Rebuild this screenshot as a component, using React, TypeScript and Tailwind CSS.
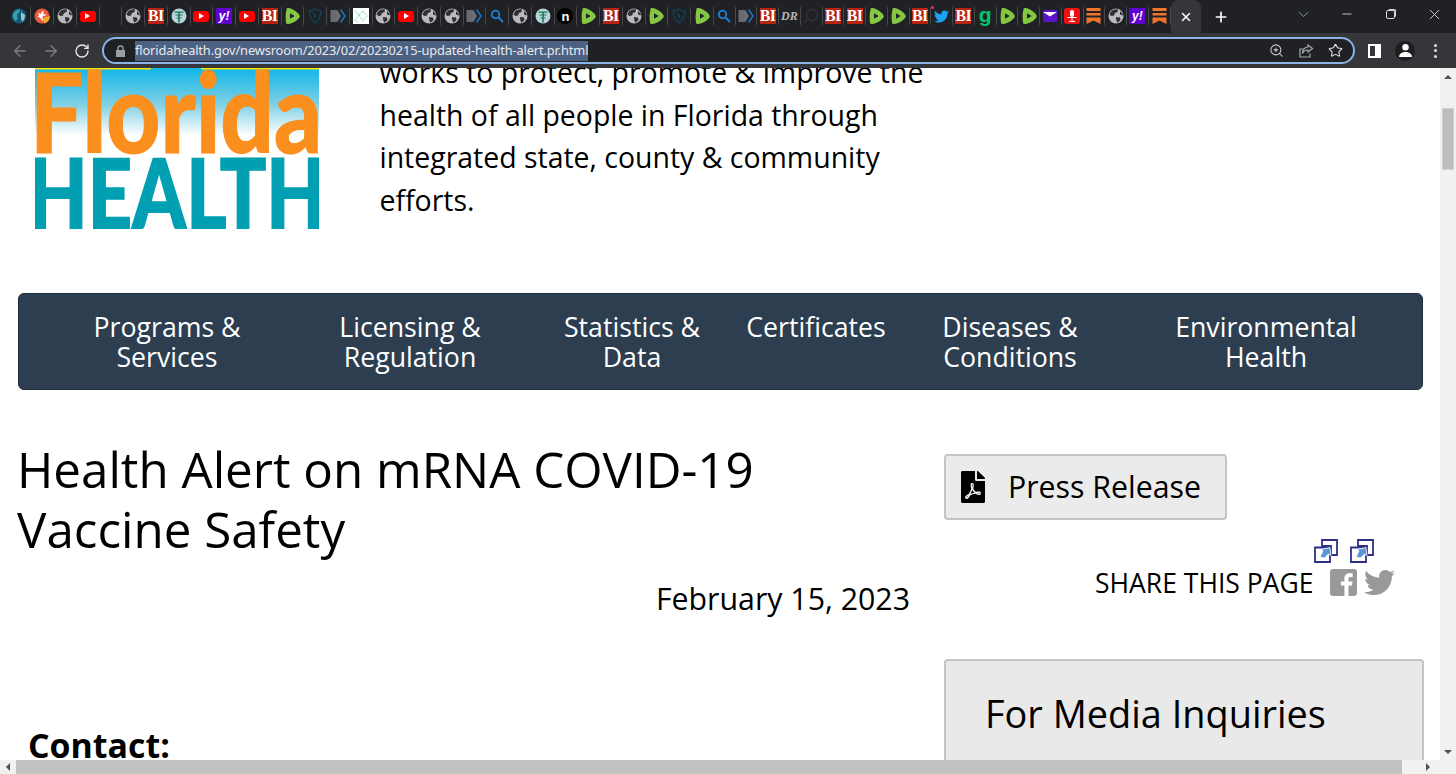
import { ArrowLeft, ArrowRight, ChevronDown, Minus, Plus, RotateCw, Star, X, ZoomIn } from "lucide-react";
import { FaFilePdf, FaTwitter } from "react-icons/fa";

const WIDE_TABS = [
  "earth", "splash", "globe", "yt", "none", "globe", "bi", "tree", "yt", "yahoo", "yt", "bi", "rumble", "shield", "tag", "pattern",
  "globe", "yt", "globe", "globe", "tag", "search", "globe", "tree", "n", "rumble", "bi", "globe", "rumble", "shield", "rumble",
];
const NARROW_TABS = [
  "search", "tag", "bi", "dr", "dark", "bi", "bi", "rumble", "rumble", "bi", "twitter", "bi", "g", "rumble", "rumble", "mail", "mic",
  "bookmark", "globe", "yahoo", "bookmark",
];

const NAV = [
  ["Programs &", "Services"],
  ["Licensing &", "Regulation"],
  ["Statistics &", "Data"],
  ["Certificates"],
  ["Diseases &", "Conditions"],
  ["Environmental", "Health"],
];

function Favicon({ kind }: { kind: string }) {
  switch (kind) {
    case "none":
      return null;
    case "globe":
      return (
        <svg width="16" height="16" viewBox="0 0 16 16">
          <circle cx="8" cy="8" r="7.5" fill="#b9babc" />
          <path d="M3 3.5C5 1.5 8 1 10 1.5L9.5 4 7 5 6 7.5 3.5 8 1.5 6.5ZM8 9l4 .5.5 2.5-3 2.8-1.2-2.3ZM12 3l2.5 2.5.5 2-3-1Z" fill="#2f3033" />
        </svg>
      );
    case "yt":
      return (
        <div className="flex h-[11px] w-[16px] items-center justify-center rounded-[3px] bg-[#f00]">
          <div className="h-0 w-0 border-y-[3px] border-l-[5px] border-y-transparent border-l-white" />
        </div>
      );
    case "bi":
      return (
        <div className="flex h-[16px] w-[16px] items-center justify-center bg-[#b7230f] font-['Liberation_Serif',serif] text-[16px] leading-none font-bold tracking-[-0.5px] text-white">
          BI
        </div>
      );
    case "rumble":
      return (
        <svg width="16" height="16" viewBox="0 0 16 16">
          <path d="M2.5 1.5C2 .5 3 0 4.5 0 8 .3 13 3.5 15 6.5c1 1.500 1 2.500 0 3.500-2.500 3-7 5.700-10.500 6C3 16 2 15.500 2 14.500c-.6-4-.6-9 .5-13Z" fill="#85c742" />
          <path d="M6 5.300 10.700 8 6 10.700Z" fill="#202124" />
        </svg>
      );
    case "yahoo":
      return (
        <div className="flex h-[16px] w-[16px] items-center justify-center bg-[#5f01d1] font-['Liberation_Sans',sans-serif] text-[12px] leading-none font-bold italic text-white">
          y!
        </div>
      );
    case "tree":
      return (
        <svg width="16" height="16" viewBox="0 0 16 16">
          <circle cx="8" cy="8" r="7.500" fill="#b7d3dc" />
          <path d="M3.500 3.500h9v1.300h-9ZM4.500 6.500h7v1.100h-7ZM7.200 3.500h1.600v11H7.200ZM5.500 9.500h5v1h-5Z" fill="#1c7a55" />
        </svg>
      );
    case "earth":
      return (
        <svg width="16" height="16" viewBox="0 0 16 16">
          <circle cx="8" cy="8" r="7.500" fill="#14587a" />
          <path d="M2 6c2-4 5-5 7-4.500L8 5 6 6l.5 5-2 2C2.500 11 1.500 9 2 6Z" fill="#3aa0a8" />
          <path d="M10 4l4 3-.5 4L11 14l-1-4Z" fill="#8ccbd0" />
        </svg>
      );
    case "splash":
      return (
        <svg width="16" height="16" viewBox="0 0 16 16">
          <circle cx="8" cy="8" r="7.500" fill="#ee5b3a" />
          <path d="M10 9.500 16 8a8 8 0 0 1-6 7.500Z" fill="#f6a623" />
          <path d="M4 5l3 1 1-3 2 1-1 2 3 .5-1 1.500-2-.5-.5 3 2 2H8L6 9.500 3.500 9 5 7.500Z" fill="#fff" />
        </svg>
      );
    case "shield":
      return (
        <svg width="16" height="16" viewBox="0 0 16 16" fill="none" stroke="#10455c" strokeWidth="1.300">
          <path d="M2 3c2 0 5-1 6-2 2 1 4 2 6 2 0 5-2 9-6 12C4.500 12 2.500 8 2 3Z" />
          <path d="M6 5l3 3-2 2" />
        </svg>
      );
    case "tag":
      return (
        <svg width="16" height="16" viewBox="0 0 16 16">
          <path d="M.5 2h7L11 8l-3.500 6h-7Z" fill="#6b6c70" />
          <path d="M10.500 1.500 15 8l-4.500 6.500" fill="none" stroke="#1a73c8" strokeWidth="1.600" />
        </svg>
      );
    case "pattern":
      return (
        <div className="flex h-[16px] w-[16px] items-center justify-center bg-white">
          <svg width="14" height="14" viewBox="0 0 14 14" fill="none" stroke="#9fdccf" strokeWidth="1.200" strokeDasharray="2 1">
            <path d="M1 2l4 4 4-4M9 2l4 5-4 5M5 6 1 11l3 2M5 6l4 6" />
          </svg>
        </div>
      );
    case "search":
      return (
        <svg width="14" height="14" viewBox="0 0 14 14" fill="none" stroke="#1c84d8" strokeWidth="1.800">
          <circle cx="5.500" cy="5.500" r="3.800" />
          <path d="m8.500 8.500 4.500 4.500" />
        </svg>
      );
    case "n":
      return (
        <div className="flex h-[16px] w-[16px] items-center justify-center rounded-full bg-black font-['Liberation_Sans',sans-serif] text-[13px] leading-none font-bold text-white">
          n
        </div>
      );
    case "dr":
      return <div className="font-['Liberation_Serif',serif] text-[12px] leading-none font-bold italic text-[#b5b5b5]">DR</div>;
    case "dark":
      return (
        <svg width="16" height="16" viewBox="0 0 16 16" fill="none" stroke="#2e2f32" strokeWidth="1.800">
          <circle cx="9" cy="7" r="5.500" />
          <path d="M5 11l-3.500 3.500" />
        </svg>
      );
    case "twitter":
      return (
        <div className="relative">
          <FaTwitter className="text-[#1da1f2]" size={15} />
          <div className="absolute -top-[3px] -left-[3px] h-[3px] w-[3px] rounded-full bg-[#ee2a7b]" />
        </div>
      );
    case "g":
      return <div className="-mt-[4px] font-['Liberation_Sans',sans-serif] text-[21px] leading-none font-bold text-[#05c46b]">g</div>;
    case "mail":
      return (
        <svg width="16" height="14" viewBox="0 0 16 14">
          <path d="M1 1h14v12H1Z" fill="#5a14c8" />
          <path d="M1 3h14L8 7.500Z" fill="#fff" />
        </svg>
      );
    case "mic":
      return (
        <svg width="16" height="16" viewBox="0 0 16 16">
          <rect width="16" height="16" rx="3" fill="#ee1111" />
          <rect x="6" y="2" width="4" height="7" rx="2" fill="#fff" />
          <path d="M3.500 9h9v1h-9ZM7.500 10h1v3h-1ZM5 13h6v1H5Z" fill="#fff" />
        </svg>
      );
    case "bookmark":
      return (
        <svg width="15" height="16" viewBox="0 0 15 16">
          <path d="M.5 0h14v3H.5ZM.5 5h14v2.500H.5Z" fill="#f0742a" />
          <path d="M.5 9.500h14V16l-7-3.500L.5 16Z" fill="#f0742a" />
        </svg>
      );
    default:
      return null;
  }
}

function TabCell({ kind, wide }: { kind: string; wide: boolean }) {
  return (
    <div className={`flex h-[18px] shrink-0 items-center justify-center border-r border-[#47484c] ${wide ? "w-[22.75px]" : "w-[21.75px]"}`}>
      <Favicon kind={kind} />
    </div>
  );
}

function ExternalIcon() {
  return (
    <svg width="24" height="24" viewBox="0 0 24 24">
      <path d="M8 1h15v15H17V7H8Z" fill="#fff" stroke="#2e2f86" strokeWidth="1.800" />
      <path d="M1 8.500h15v14.500H1Z" fill="#fff" stroke="#2e2f86" strokeWidth="1.800" />
      <path d="M6 18l3-6-2-1.500 9-2 1 8-2.500-1.500-4 4Z" fill="#5d93d9" stroke="#fff" strokeWidth="0.800" />
    </svg>
  );
}

function FacebookIcon() {
  return (
    <svg width="27" height="27" viewBox="0 0 27 27" className="ml-[17px] -mt-[1px] shrink-0">
      <rect width="27" height="27" rx="3" fill="#999" />
      <path d="M18.500 27V16.500h3.400l.6-4h-4V10c0-1.200.4-2 2.100-2h2.100V4.400c-.4 0-1.600-.2-3.100-.2-3.100 0-5.200 1.900-5.200 5.300v3h-3.500v4h3.500V27Z" fill="#fff" />
    </svg>
  );
}

function FloridaLogo() {
  return (
    <svg width="284" height="161" viewBox="0 0 284 161" className="shrink-0">
      <defs>
        <linearGradient id="sky" x1="0" y1="0" x2="0" y2="1">
          <stop offset="0" stopColor="#11b6e8" />
          <stop offset="0.4" stopColor="#7fcfe4" />
          <stop offset="0.75" stopColor="#ffffff" />
        </linearGradient>
      </defs>
      <rect width="284" height="90" fill="url(#sky)" />
      <rect width="116" height="1.500" fill="#ffe600" />
      <rect x="166" width="118" height="1.500" fill="#ffe600" />
      <text x="-5" y="85" textLength="292" lengthAdjust="spacingAndGlyphs" fontFamily="Lato, sans-serif" fontWeight="900" fontSize="110" fill="#fa8f1e" stroke="#fa8f1e" strokeWidth="1">
        Florida
      </text>
      <text x="-7" y="161" textLength="298" lengthAdjust="spacingAndGlyphs" fontFamily="Lato, sans-serif" fontWeight="900" fontSize="98" fill="#009fb1" stroke="#009fb1" strokeWidth="1.500">
        HEALTH
      </text>
    </svg>
  );
}

export default function App() {
  return (
    <div className="flex h-[774px] w-[1456px] flex-col overflow-hidden bg-white font-['Open_Sans',sans-serif] text-black">
      {/* tab strip */}
      <div className="flex h-[33px] shrink-0 bg-[#202124]">
        <div className="flex h-[33px] items-center pl-[8.500px] pb-px">
          {WIDE_TABS.map((k, i) => (
            <TabCell key={i} kind={k} wide />
          ))}
          {NARROW_TABS.map((k, i) => (
            <TabCell key={i} kind={k} wide={false} />
          ))}
        </div>
        <div className="flex h-[33px] w-[30px] shrink-0 items-center justify-center rounded-t-lg bg-[#35363a]">
          <X size={14} strokeWidth={2.500} className="text-white" />
        </div>
        <div className="flex h-[33px] w-[40px] shrink-0 items-center justify-center">
          <Plus size={16} strokeWidth={2.500} className="text-white" />
        </div>
        <div className="flex-1" />
        <div className="flex h-[28px] shrink-0 text-[#d5d6d8]">
          <div className="flex w-[43.500px] items-center justify-center">
            <ChevronDown size={17} strokeWidth={1.300} className="text-[#9aa0a6]" />
          </div>
          <div className="flex w-[43.500px] items-center justify-center">
            <Minus size={14} strokeWidth={1.500} />
          </div>
          <div className="flex w-[43.500px] items-center justify-center">
            <div className="relative h-[9px] w-[9px] rounded-[2px] border border-[#d5d6d8] shadow-[1.500px_-1.500px_0_-0.500px_#d5d6d8]" />
          </div>
          <div className="flex w-[43.500px] items-center justify-center">
            <X size={17} strokeWidth={1.300} />
          </div>
        </div>
      </div>

      {/* toolbar */}
      <div className="flex h-[35px] shrink-0 items-center bg-[#35363a]">
        <div className="flex w-[102px] shrink-0 items-center pl-[11px]">
          <ArrowLeft size={18} strokeWidth={1.700} className="text-[#7c7e82]" />
          <ArrowRight size={18} strokeWidth={1.700} className="ml-[13px] text-[#7c7e82]" />
          <RotateCw size={16} strokeWidth={2} className="ml-[14px] text-[#e8eaed]" />
        </div>
        <div className="flex h-[27px] w-[1253px] shrink-0 items-center rounded-full border-2 border-[#8ab4e8] bg-[#202124] pr-[10px] pl-[11px]">
          <svg width="11" height="12" viewBox="0 0 11 12" fill="#9aa0a6">
            <path d="M1 5h9v7H1Z" />
            <path d="M3 5V3.500a2.500 2.500 0 0 1 5 0V5" fill="none" stroke="#9aa0a6" strokeWidth="1.300" />
          </svg>
          <span className="ml-[9px] flex h-[20px] items-center bg-[#4d6182] font-['Noto_Sans',sans-serif] text-[12.800px] tracking-[-0.120px] whitespace-nowrap text-[#e8eaed]">
            floridahealth.gov/newsroom/2023/02/20230215-updated-health-alert.pr.html
          </span>
          <div className="flex-1" />
          <ZoomIn size={15} strokeWidth={1.700} className="text-[#c9cbce]" />
          <svg width="16" height="16" viewBox="0 0 16 16" fill="none" stroke="#a6a8ac" strokeWidth="1.200" className="ml-[14px]">
            <path d="M12 10.500V14H2V6h3" />
            <path d="M10 2l4.500 3.500L10 9V7C7.500 7 5.500 8 4.500 10.500 4.500 7 6.500 4 10 4Z" />
          </svg>
          <Star size={15} strokeWidth={1.700} className="ml-[14px] text-[#e8eaed]" />
        </div>
        <div className="ml-[13px] flex h-[14px] w-[13px] shrink-0 justify-end border-2 border-white bg-[#35363a]">
          <div className="h-full w-[4px] bg-white" />
        </div>
        <div className="ml-[14px] flex h-[20px] w-[20px] shrink-0 items-center justify-center overflow-hidden rounded-full bg-[#1d1e20]">
          <svg width="15" height="15" viewBox="0 0 14 14" fill="#fff">
            <circle cx="7" cy="4" r="3" />
            <path d="M1 13c0-3 3-4.500 6-4.500s6 1.500 6 4.500Z" />
          </svg>
        </div>
        <div className="ml-[19px] flex shrink-0 flex-col gap-[2.500px]">
          <div className="h-[3px] w-[3px] rounded-full bg-[#e0e1e3]" />
          <div className="h-[3px] w-[3px] rounded-full bg-[#e0e1e3]" />
          <div className="h-[3px] w-[3px] rounded-full bg-[#e0e1e3]" />
        </div>
      </div>

      {/* page */}
      <div className="flex min-h-0 flex-1">
        <div className="flex min-w-0 flex-1 flex-col">
          <div className="min-h-0 flex-1 overflow-hidden">
            <div className="flex h-[161px] pl-[35px]">
              <FloridaLogo />
              <p className="-mt-[17px] ml-[60.500px] w-[560px] text-[28.450px] leading-[42.500px]">
                works to protect, promote &amp; improve the health of all people in Florida through integrated state, county &amp; community efforts.
              </p>
            </div>

            <div className="mt-[64px] ml-[17.500px] grid h-[97px] w-[1405px] grid-cols-[244px_242px_202px_166px_222px_290px] rounded-md border border-[#1f2d3d] bg-[#2c3e50] pt-[18px] pl-[26.500px] text-center text-[26.700px] leading-[29.500px] text-white">
              {NAV.map((lines) => (
                <div key={lines[0]}>
                  {lines.map((l) => (
                    <div key={l}>{l}</div>
                  ))}
                </div>
              ))}
            </div>

            <div className="flex">
              <div className="ml-[17px] w-[893px] shrink-0">
                <h1 className="mt-[49px] w-[780px] text-[49.300px] leading-[60px] font-normal">Health Alert on mRNA COVID-19 Vaccine Safety</h1>
                <div className="mt-[20px] text-right text-[30.300px] leading-[40px]">February 15, 2023</div>
                <div className="mt-[104px] ml-[11px] text-[33.900px] leading-[44px] font-bold">Contact:</div>
              </div>
              <div className="ml-[34px] w-[480px] shrink-0">
                <div className="mt-[64px] flex h-[66px] w-[283px] items-center rounded border-2 border-[#c4c4c4] bg-[#ebebeb] pl-[11px]">
                  <FaFilePdf size={32} className="text-black" />
                  <span className="ml-[19px] text-[30.300px] leading-none">Press Release</span>
                </div>
                <div className="mt-[19px] flex w-[430px] justify-end gap-[12px]">
                  <ExternalIcon />
                  <ExternalIcon />
                </div>
                <div className="mt-[2px] flex items-center pl-[151px]">
                  <span className="text-[26.500px] leading-[36px] whitespace-nowrap">SHARE THIS PAGE</span>
                  <FacebookIcon />
                  <FaTwitter size={31} className="ml-[7px] -mt-[1px] text-[#999]" />
                </div>
                <div className="mt-[58px] h-[200px] rounded border-2 border-[#c4c4c4] bg-[#e9e9e9] pt-[25px] pl-[39px]">
                  <div className="text-[37.900px] leading-[54px]">For Media Inquiries</div>
                </div>
              </div>
            </div>
          </div>

          {/* horizontal scrollbar */}
          <div className="flex h-[14px] shrink-0 items-center bg-[#f1f1f1]">
            <div className="flex w-[16px] shrink-0 justify-center">
              <div className="h-0 w-0 border-y-4 border-r-4 border-y-transparent border-r-[#505050]" />
            </div>
            <div className="h-full w-[1386px] bg-[#c1c1c1]" />
            <div className="flex-1" />
            <div className="flex w-[24px] shrink-0 justify-center">
              <div className="h-0 w-0 border-y-4 border-l-4 border-y-transparent border-l-[#505050]" />
            </div>
          </div>
        </div>

        {/* vertical scrollbar */}
        <div className="flex w-[16px] shrink-0 flex-col items-center bg-[#f1f1f1] pt-[7px] pb-[20px]">
          <div className="h-0 w-0 border-x-4 border-b-4 border-x-transparent border-b-[#505050]" />
          <div className="mt-[29px] h-[62px] w-[12px] border border-[#d0d0d0] bg-[#bdbdbd]" />
          <div className="flex-1" />
          <div className="h-0 w-0 border-x-4 border-t-4 border-x-transparent border-t-[#505050]" />
        </div>
      </div>
    </div>
  );
}
